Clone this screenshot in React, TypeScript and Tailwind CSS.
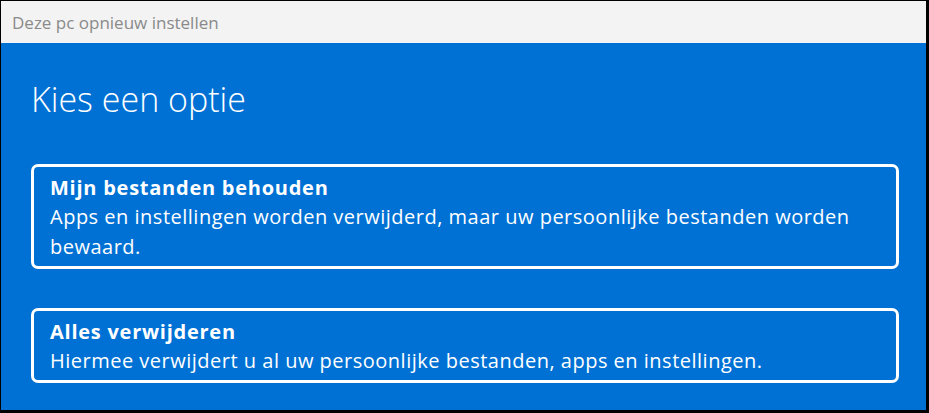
import React from 'react';

const options = [
  {
    title: 'Mijn bestanden behouden',
    text: 'Apps en instellingen worden verwijderd, maar uw persoonlijke bestanden worden bewaard.',
  },
  {
    title: 'Alles verwijderen',
    text: 'Hiermee verwijdert u al uw persoonlijke bestanden, apps en instellingen.',
  },
];

const App: React.FC = () => {
  return (
    <div
      className="w-[929px] h-[413px] bg-black pl-px pt-px pr-[3px] pb-[3px] overflow-hidden"
      style={{ fontFamily: '"Open Sans", "Noto Sans", sans-serif' }}
    >
      <div className="w-full h-full flex flex-col bg-[#0071d4]">
        {/* Title bar */}
        <div className="h-[42px] shrink-0 bg-[#f3f3f3] flex items-center pl-[11px]">
          <span className="text-[17px] text-[#8a8a8a] leading-none">Deze pc opnieuw instellen</span>
        </div>

        <div className="flex flex-col pl-[30px] pr-[27px] pt-[34px]">
          <h1 className="text-[34px] font-light text-white leading-[44px]">Kies een optie</h1>

          <div className="flex flex-col gap-[39px] mt-[43px]">
            {options.map(opt => (
              <div
                key={opt.title}
                className="border-[3px] border-white rounded-[7px] pl-[16px] pr-[4px] pt-[6px] pb-[4px] text-white"
              >
                <div className="text-[20px] font-bold leading-[29px] tracking-[0.75px]">{opt.title}</div>
                <div className="text-[20px] leading-[30px] tracking-[0.5px]">{opt.text}</div>
              </div>
            ))}
          </div>
        </div>
      </div>
    </div>
  );
};

export default App;
